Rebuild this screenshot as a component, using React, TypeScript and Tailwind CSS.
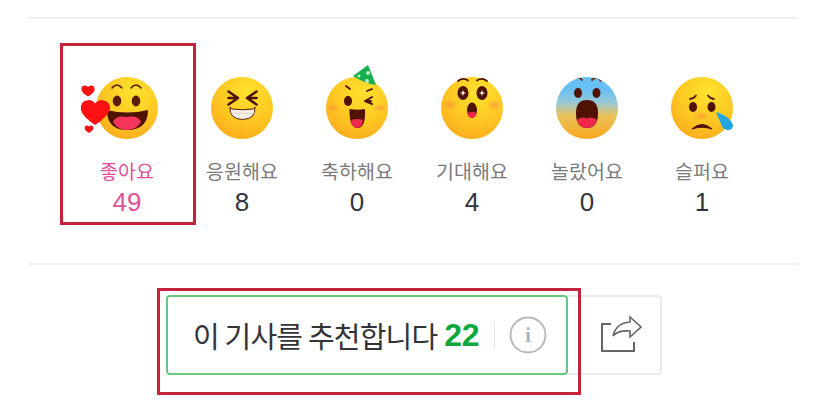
import React from 'react';

const Defs = ({ id, top = '#ffe22e', bottom = '#fba71c' }: { id: string; top?: string; bottom?: string }) => (
  <defs>
    <radialGradient id={id} cx="0.6" cy="0.25" r="0.85">
      <stop offset="0" stopColor={top} />
      <stop offset="0.55" stopColor="#fdc722" />
      <stop offset="1" stopColor={bottom} />
    </radialGradient>
    <radialGradient id={`${id}-cheek`}>
      <stop offset="0" stopColor="#f9973a" stopOpacity="0.75" />
      <stop offset="1" stopColor="#f9973a" stopOpacity="0" />
    </radialGradient>
  </defs>
);

const LikeFace = () => (
  <>
    <Defs id="like" />
    <circle r="31" fill="url(#like)" />
    <path d="M-15 -20q5 -6 10 0M4 -20q5 -6 10 0" fill="none" stroke="#5a1d05" strokeWidth="1.600" strokeLinecap="round" />
    <ellipse cx="-10" cy="-7" rx="4.300" ry="5.400" fill="#5a1d05" />
    <ellipse cx="9" cy="-7" rx="4.300" ry="5.400" fill="#5a1d05" />
    <path d="M-20 2q20 5 41 0q0 20 -21 20q-20 0 -20 -20z" fill="#4f1203" />
    <path d="M-14 14q3 -7 14 -5q11 -2 14 5q-5 8 -14 8q-9 0 -14 -8z" fill="#f5345c" />
    <g fill="#fb1111">
      <path d="M-32 17Q-45 8 -46 2Q-47 -8 -38 -8Q-34 -8 -32 -4.500Q-29 -8 -25 -8Q-17 -7 -17 0Q-18 8 -32 17z" />
      <path d="M-39 -11.500q-6 -3.500 -6.500 -6.500q-.5 -4.500 3.500 -4.500q2 0 3 1.500q1.200 -1.500 3.200 -1.500q3.800 .2 3.300 4.500q-.5 3 -6.500 6.500z" />
      <path d="M-38 25q-4 -2.500 -4.300 -4.500q-.3 -3 2.300 -3q1.200 0 2 1q.8 -1 2 -1q2.600 0 2.300 3q-.3 2 -4.300 4.500z" />
    </g>
  </>
);

const CheerFace = () => (
  <>
    <Defs id="cheer" />
    <circle r="31" fill="url(#cheer)" />
    <path d="M-13.500 -16.500L-4 -10L-13.500 -3.500M-13.500 -10H-4" fill="none" stroke="#4f1203" strokeWidth="2.600" strokeLinecap="round" strokeLinejoin="round" />
    <path d="M14.500 -16.500L5 -10L14.500 -3.500M14.500 -10H5" fill="none" stroke="#4f1203" strokeWidth="2.600" strokeLinecap="round" strokeLinejoin="round" />
    <path d="M-12 -1q1 2 2 2q10.500 1.500 21 0q1 0 2 -2q1 12 -12.500 12.500q-13.500 -.5 -12.500 -12.500z" fill="#f3f0e8" stroke="#5a1d05" strokeWidth="1" />
    <path d="M-11.500 5q12.500 1 25 0" stroke="#c9c6bd" strokeWidth=".6" fill="none" />
  </>
);

const PartyFace = () => (
  <>
    <Defs id="party" />
    <circle r="31" fill="url(#party)" />
    <ellipse cx="-24" cy="0" rx="7" ry="4" fill="url(#party-cheek)" />
    <ellipse cx="23" cy="0" rx="7" ry="4" fill="url(#party-cheek)" />
    <path d="M-4 -32L11 -43L19 -23Q9 -24 -4 -32z" fill="#15b04c" />
    <circle cx="11" cy="-35" r="2" fill="#bff0cc" />
    <circle cx="10" cy="-27" r="2" fill="#bff0cc" />
    <circle cx="2" cy="-32" r="1.500" fill="#bff0cc" />
    <path d="M-11 -22l4 3M15 -19l-5 2" fill="none" stroke="#4f1203" strokeWidth="1.800" strokeLinecap="round" />
    <ellipse cx="-9" cy="-7" rx="4" ry="5" fill="#4f1203" />
    <path d="M15 -11l-7 4l7 3M14 -7h-5" fill="none" stroke="#4f1203" strokeWidth="2" strokeLinecap="round" strokeLinejoin="round" />
    <path d="M-7.500 1q8 1.500 15.500 0q1 19 -7.500 19q-8.500 0 -8 -19z" fill="#4f1203" />
    <path d="M-6 12q6 -2 12 0q-1 8 -6 8q-5 0 -6 -8z" fill="#f0284e" />
  </>
);

const WowFace = () => (
  <>
    <Defs id="wow" />
    <circle r="31" fill="url(#wow)" />
    <ellipse cx="-22" cy="-3" rx="8" ry="5.500" fill="url(#wow-cheek)" />
    <ellipse cx="22" cy="-3" rx="8" ry="5.500" fill="url(#wow-cheek)" />
    <path d="M-14 -27q5 -4 10 -.5M5 -27.500q5 -3.500 10 .5" fill="none" stroke="#4f1203" strokeWidth="1.800" strokeLinecap="round" />
    <ellipse cx="-9" cy="-15" rx="5.500" ry="7" fill="#4f1203" />
    <ellipse cx="10" cy="-15" rx="5.500" ry="7" fill="#4f1203" />
    <path d="M-9 -18l.8 2.200l2.200 .8l-2.200 .8l-.8 2.200l-.8 -2.200l-2.200 -.8l2.200 -.8zM10 -18l.8 2.200l2.200 .8l-2.200 .8l-.8 2.200l-.8 -2.200l-2.200 -.8l2.200 -.8z" fill="#fff" />
    <ellipse cx="0" cy="2" rx="5" ry="7.500" fill="#4f1203" />
    <path d="M-4.500 5q4.500 -2 9 0q-.5 5 -4.500 5q-4 0 -4.500 -5z" fill="#f0284e" />
  </>
);

const ShockFace = () => (
  <>
    <defs>
      <linearGradient id="shock" x1="0" y1="0" x2="0" y2="1">
        <stop offset="0.2" stopColor="#68bff4" />
        <stop offset="0.4" stopColor="#93c8d8" />
        <stop offset="0.62" stopColor="#e8c25a" />
        <stop offset="1" stopColor="#fba71c" />
      </linearGradient>
      <clipPath id="shock-clip">
        <circle r="31" />
      </clipPath>
    </defs>
    <circle r="31" fill="url(#shock)" />
    <g clipPath="url(#shock-clip)">
      <path d="M-14 -29q5 -4 9 1M5 -28q5 -5 9 1" fill="none" stroke="#6a2a0c" strokeWidth="1.800" strokeLinecap="round" />
    </g>
    <ellipse cx="-9" cy="-15" rx="4" ry="5" fill="#4f1203" />
    <ellipse cx="9.500" cy="-15" rx="4" ry="5" fill="#4f1203" />
    <path d="M0 -8q11 0 11 13q0 15 -11 15q-11 0 -11 -15q0 -13 11 -13z" fill="#4f1203" />
    <path d="M-10 12q5 -4 10 -1.500q5 -2.500 10 1.500q-2 8 -10 8q-8 0 -10 -8z" fill="#f0284e" />
  </>
);

const SadFace = () => (
  <>
    <Defs id="sad" />
    <circle r="31" fill="url(#sad)" />
    <ellipse cx="-1" cy="8" rx="9" ry="4.500" fill="url(#sad-cheek)" />
    <path d="M-12 -9q4 -.5 6 -3.500M12 -9q-4 -.5 -6 -3.500" fill="none" stroke="#5a1d05" strokeWidth="1.800" strokeLinecap="round" />
    <ellipse cx="-9" cy="-1" rx="4" ry="5" fill="#4f1203" />
    <ellipse cx="9.500" cy="-1" rx="4" ry="5" fill="#4f1203" />
    <path d="M-10 21q10 -9 20 0q-10 -3.500 -20 0z" fill="#4f1203" stroke="#4f1203" strokeWidth="1" strokeLinejoin="round" />
    <path d="M14 4Q28 8 31 17Q31 22 26 22Q21 22 19 16Q16 8 14 4z" fill="#22a5e0" />
  </>
);

const reactions = [
  { label: '좋아요', count: 49, face: <LikeFace />, active: true },
  { label: '응원해요', count: 8, face: <CheerFace /> },
  { label: '축하해요', count: 0, face: <PartyFace /> },
  { label: '기대해요', count: 4, face: <WowFace /> },
  { label: '놀랐어요', count: 0, face: <ShockFace /> },
  { label: '슬퍼요', count: 1, face: <SadFace /> },
];

function App() {
  return (
    <div className="h-[419px] w-[828px] overflow-hidden bg-white pl-[29px] pr-[30px] pt-[17px] font-['Noto_Sans_CJK_KR',sans-serif]">
      <div className="h-[248px] border-y-2 border-[#efefef]">
        <ul className="flex justify-center pl-[2px] pt-[58px]">
          {reactions.map((r) => (
            <li key={r.label} className="relative flex w-[115px] flex-col items-center">
              {r.active && (
                <div className="absolute -top-[34px] -right-[11.5px] -left-[9.5px] h-[182px] border-[3px] border-[#c4233c]" />
              )}
              <svg width="62" height="62" viewBox="-31 -31 62 62" className="overflow-visible">
                {r.face}
              </svg>
              <span className={`mt-[19px] text-[19.5px] leading-[26px] ${r.active ? 'text-[#e0519a]' : 'text-[#7b7b7b]'}`}>
                {r.label}
              </span>
              <span className={`mt-[3px] font-['Liberation_Sans',sans-serif] text-[26px] leading-[30px] ${r.active ? 'text-[#e0519a]' : 'text-[#33343a]'}`}>
                {r.count}
              </span>
            </li>
          ))}
        </ul>
      </div>
      <div className="ml-px mt-[30px] flex justify-center">
        <div className="relative z-10 flex h-[80px] w-[402px] items-center rounded-[4px] border-2 border-[#66c77f] bg-white pl-[25px]">
          <span className="text-[29px] leading-none tracking-[-0.8px] text-[#33343a]">이 기사를 추천합니다</span>
          <span className="ml-[7px] font-['Liberation_Sans',sans-serif] text-[32px] font-bold leading-none tracking-[-0.5px] text-[#0ca83c]">22</span>
          <span className="ml-[15px] h-[28px] w-px bg-[#e8e8e8]" />
          <svg width="38" height="38" viewBox="0 0 38 38" className="ml-[14px]">
            <circle cx="19" cy="19" r="17.500" fill="none" stroke="#b9b9b9" strokeWidth="2" />
            <text x="19" y="26" textAnchor="middle" fontFamily="Liberation Serif" fontWeight="700" fontSize="20" fill="#b0b0b0">i</text>
          </svg>
          <div className="absolute -top-[9px] -right-[15px] -bottom-[22px] -left-[11px] border-[3px] border-[#c4233c]" />
        </div>
        <div className="flex h-[80px] w-[94px] items-center justify-end rounded-r-[4px] border-2 border-l-0 border-[#ececec] pr-[18px]">
          <svg width="42" height="40" viewBox="0 0 42 40" fill="none" stroke="#666" strokeWidth="2">
            <path d="M11 9H2V36H34V27" />
            <path d="M30 2L41 12L30 22V16Q18 15 13 21Q16 8 30 7Z" strokeWidth="1.600" />
          </svg>
        </div>
      </div>
    </div>
  );
}

export default App;
